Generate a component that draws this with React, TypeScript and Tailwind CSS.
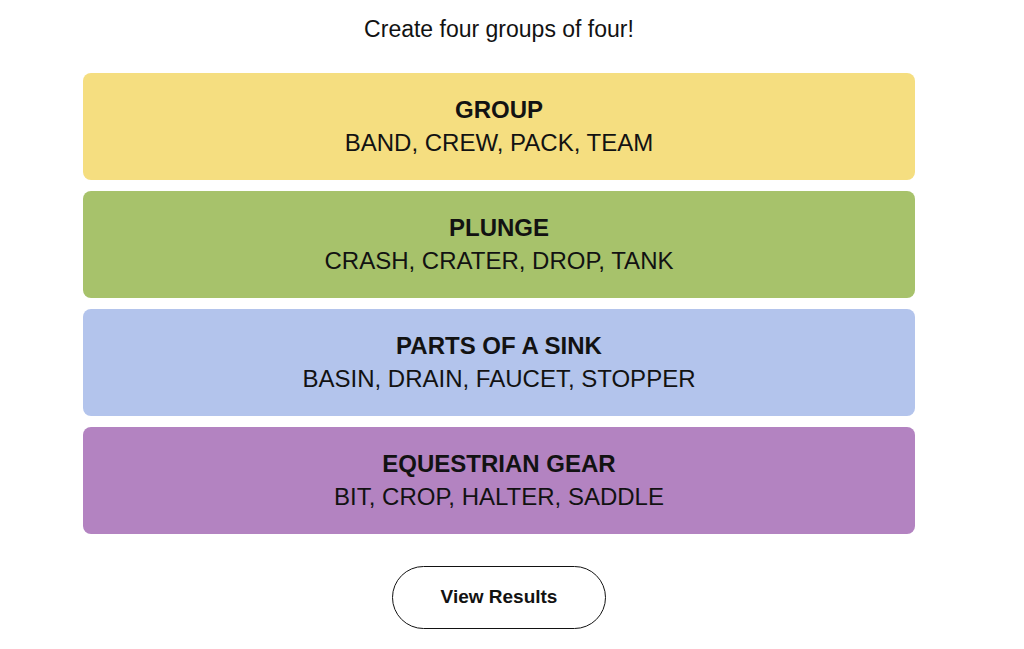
import React from 'react';

const groups = [
  { title: 'GROUP', words: 'BAND, CREW, PACK, TEAM', bg: 'bg-[#f5de80]' },
  { title: 'PLUNGE', words: 'CRASH, CRATER, DROP, TANK', bg: 'bg-[#a7c26b]' },
  { title: 'PARTS OF A SINK', words: 'BASIN, DRAIN, FAUCET, STOPPER', bg: 'bg-[#b3c4ec]' },
  { title: 'EQUESTRIAN GEAR', words: 'BIT, CROP, HALTER, SADDLE', bg: 'bg-[#b383c1]' },
];

export default function App() {
  return (
    <div
      className="min-h-screen w-[998px] bg-white text-[#121212] flex flex-col items-center"
      style={{ fontFamily: '"Liberation Sans", Arial, sans-serif' }}
    >
      <p className="mt-[15px] text-[23px] leading-[28px]">Create four groups of four!</p>

      <div className="mt-[30px] w-[832px] flex flex-col gap-[11px]">
        {groups.map((g) => (
          <div
            key={g.title}
            className={`${g.bg} h-[107px] rounded-[8px] flex flex-col items-center justify-center`}
          >
            <div className="text-[24px] leading-[30px] font-bold">{g.title}</div>
            <div className="text-[24px] leading-[30px] mt-[3px]">{g.words}</div>
          </div>
        ))}
      </div>

      <button className="mt-[32px] w-[214px] h-[63px] rounded-full border border-[#121212] bg-white text-[19px] font-bold">
        View Results
      </button>
    </div>
  );
}
